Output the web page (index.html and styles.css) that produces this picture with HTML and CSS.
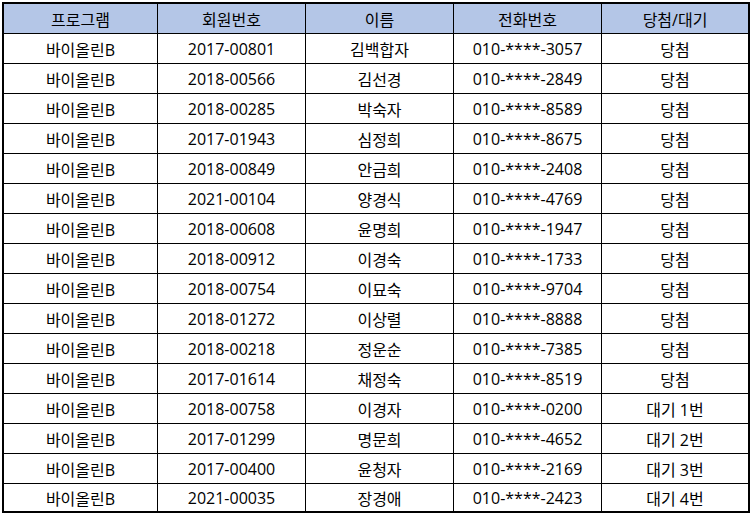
FILE: index.html
```html
<!DOCTYPE html>
<html lang="ko">
<head>
<meta charset="utf-8">
<link rel="stylesheet" href="styles.css">
</head>
<body>
<div class="sheet">
  <div class="grid">
    <div class="cell head">프로그램</div><div class="cell head">회원번호</div><div class="cell head">이름</div><div class="cell head">전화번호</div><div class="cell head">당첨/대기</div>
    <div class="cell">바이올린B</div><div class="cell">2017-00801</div><div class="cell">김백합자</div><div class="cell">010-****-3057</div><div class="cell">당첨</div>
    <div class="cell">바이올린B</div><div class="cell">2018-00566</div><div class="cell">김선경</div><div class="cell">010-****-2849</div><div class="cell">당첨</div>
    <div class="cell">바이올린B</div><div class="cell">2018-00285</div><div class="cell">박숙자</div><div class="cell">010-****-8589</div><div class="cell">당첨</div>
    <div class="cell">바이올린B</div><div class="cell">2017-01943</div><div class="cell">심정희</div><div class="cell">010-****-8675</div><div class="cell">당첨</div>
    <div class="cell">바이올린B</div><div class="cell">2018-00849</div><div class="cell">안금희</div><div class="cell">010-****-2408</div><div class="cell">당첨</div>
    <div class="cell">바이올린B</div><div class="cell">2021-00104</div><div class="cell">양경식</div><div class="cell">010-****-4769</div><div class="cell">당첨</div>
    <div class="cell">바이올린B</div><div class="cell">2018-00608</div><div class="cell">윤명희</div><div class="cell">010-****-1947</div><div class="cell">당첨</div>
    <div class="cell">바이올린B</div><div class="cell">2018-00912</div><div class="cell">이경숙</div><div class="cell">010-****-1733</div><div class="cell">당첨</div>
    <div class="cell">바이올린B</div><div class="cell">2018-00754</div><div class="cell">이묘숙</div><div class="cell">010-****-9704</div><div class="cell">당첨</div>
    <div class="cell">바이올린B</div><div class="cell">2018-01272</div><div class="cell">이상렬</div><div class="cell">010-****-8888</div><div class="cell">당첨</div>
    <div class="cell">바이올린B</div><div class="cell">2018-00218</div><div class="cell">정운순</div><div class="cell">010-****-7385</div><div class="cell">당첨</div>
    <div class="cell">바이올린B</div><div class="cell">2017-01614</div><div class="cell">채정숙</div><div class="cell">010-****-8519</div><div class="cell">당첨</div>
    <div class="cell">바이올린B</div><div class="cell">2018-00758</div><div class="cell">이경자</div><div class="cell">010-****-0200</div><div class="cell">대기 1번</div>
    <div class="cell">바이올린B</div><div class="cell">2017-01299</div><div class="cell">명문희</div><div class="cell">010-****-4652</div><div class="cell">대기 2번</div>
    <div class="cell">바이올린B</div><div class="cell">2017-00400</div><div class="cell">윤청자</div><div class="cell">010-****-2169</div><div class="cell">대기 3번</div>
    <div class="cell">바이올린B</div><div class="cell">2021-00035</div><div class="cell">장경애</div><div class="cell">010-****-2423</div><div class="cell">대기 4번</div>
  </div>
</div>
</body>
</html>
```
FILE: styles.css
```css
html, body {
  margin: 0;
  padding: 0;
  background: #ffffff;
}
.sheet {
  padding: 2px 0 0 2px;
}
.grid {
  width: 744px;
  border: 2px solid #000;
  background: #000;
  display: grid;
  grid-template-columns: 153px 147px 147px 147px 146px;
  grid-template-rows: 29px repeat(15, 29px) 27px;
  gap: 1px;
  font-family: "Open Sans", "Noto Sans CJK KR", sans-serif;
  font-size: 16px;
  color: #000;
}
.cell {
  background: #fff;
  display: flex;
  align-items: center;
  justify-content: center;
  white-space: pre;
}
.head {
  background: #b4c6e7;
}
```
